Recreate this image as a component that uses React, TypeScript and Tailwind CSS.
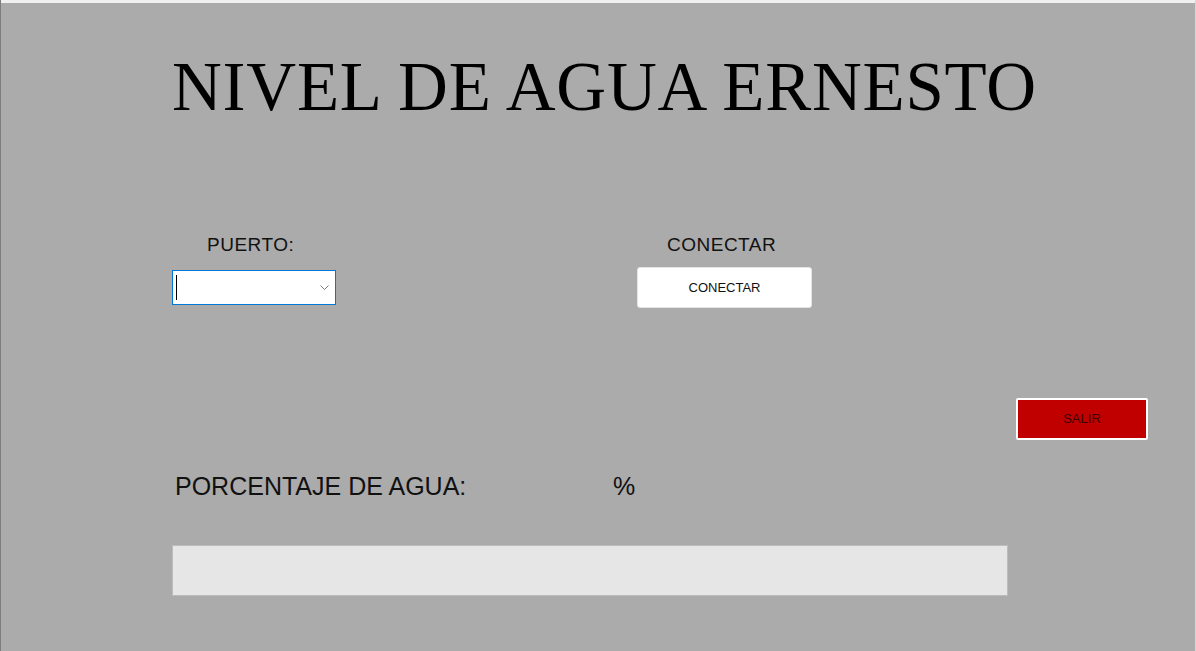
/*
 * Nivel de agua – panel de control
 * Fondo gris tipo formulario de escritorio, título serif grande
 */

const sans = { fontFamily: "'Liberation Sans', Arial, sans-serif" };
const serif = { fontFamily: "'Liberation Serif', 'Times New Roman', serif" };

function Chevron() {
  return (
    <svg width="9" height="5" viewBox="0 0 9 5" fill="none">
      <path d="M0.5 0.5 L4.5 4.5 L8.5 0.5" stroke="#7a7a7a" strokeWidth="1" />
    </svg>
  );
}

export default function App() {
  return (
    <div className="w-[1196px] h-[651px] overflow-hidden bg-[#ababab] flex flex-col border-l border-l-[#7d7d7d] border-r border-r-[#d6d6d6]">
      {/* franja superior */}
      <div className="h-[3px] bg-[#f0f0f0] shrink-0" />

      {/* Título */}
      <h1
        className="mt-[50px] pl-[171px] text-[69px] leading-none tracking-[0.75px] text-black whitespace-nowrap"
        style={serif}
      >
        NIVEL DE AGUA ERNESTO
      </h1>

      {/* Puerto + conectar */}
      <div className="mt-[113px] flex items-start pl-[171px]" style={sans}>
        <div className="w-[164px] flex flex-col">
          <span className="pl-[35px] text-[19px] leading-none tracking-[0.5px] text-[#111]">PUERTO:</span>
          <div className="mt-[16px] h-[35px] bg-white border border-[#0078d7] flex items-center justify-between pl-[3px] pr-[6px]">
            <span className="w-[1px] h-[25px] bg-black" />
            <Chevron />
          </div>
        </div>

        <div className="ml-[301px] w-[175px] flex flex-col">
          <span className="pl-[30px] text-[19px] leading-none tracking-[0.5px] text-[#111]">CONECTAR</span>
          <button className="mt-[13px] h-[41px] bg-white rounded-[3px] border border-[#e4e4e4] text-[13px] text-[#111] flex items-center justify-center">
            CONECTAR
          </button>
        </div>
      </div>

      {/* Salir */}
      <div className="mt-[90px] flex justify-end pr-[47px]" style={sans}>
        <button className="w-[132px] h-[42px] bg-[#c00000] border-2 border-white rounded-[2px] text-[13px] text-[#3a0000] flex items-center justify-center">
          SALIR
        </button>
      </div>

      {/* Porcentaje */}
      <div className="mt-[34px] flex items-start pl-[174px] text-[25px] leading-none text-[#111]" style={sans}>
        <span className="w-[438px]">PORCENTAJE DE AGUA:</span>
        <span>%</span>
      </div>

      {/* Barra de progreso */}
      <div className="mt-[46px] ml-[171px] w-[836px] h-[51px] bg-[#e6e6e6] border border-[#bcbcbc]" />
    </div>
  );
}
